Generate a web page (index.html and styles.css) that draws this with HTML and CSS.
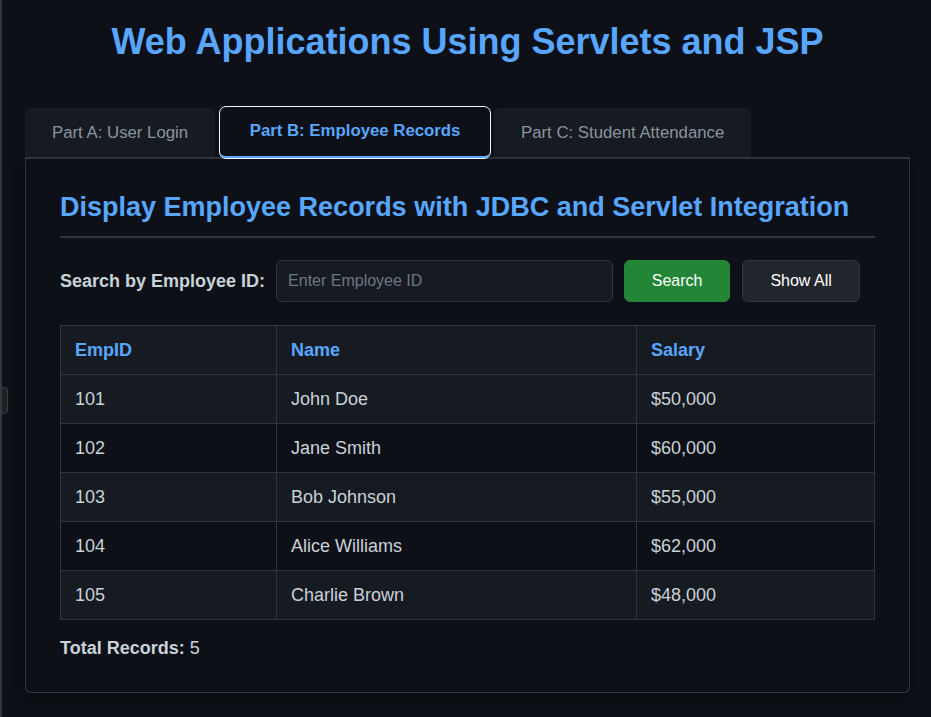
FILE: index.html
```html
<!DOCTYPE html>
<html lang="en">
<head>
<meta charset="utf-8">
<title>Web Applications Using Servlets and JSP</title>
<link rel="stylesheet" href="styles.css">
</head>
<body>
<div class="handle"></div>
<div class="container">
  <h1 class="title">Web Applications Using Servlets and JSP</h1>
  <div class="tabs">
    <button class="tab">Part A: User Login</button>
    <button class="tab active">Part B: Employee Records</button>
    <button class="tab">Part C: Student Attendance</button>
  </div>
  <div class="panel">
    <h2 class="panel-title">Display Employee Records with JDBC and Servlet Integration</h2>
    <div class="search-row">
      <label class="search-label" for="empid">Search by Employee ID:</label>
      <input class="search-input" id="empid" type="text" placeholder="Enter Employee ID">
      <button class="btn btn-green">Search</button>
      <button class="btn btn-dark">Show All</button>
    </div>
    <table class="records">
      <thead>
        <tr><th class="c-id">EmpID</th><th class="c-name">Name</th><th class="c-sal">Salary</th></tr>
      </thead>
      <tbody>
        <tr><td>101</td><td>John Doe</td><td>$50,000</td></tr>
        <tr><td>102</td><td>Jane Smith</td><td>$60,000</td></tr>
        <tr><td>103</td><td>Bob Johnson</td><td>$55,000</td></tr>
        <tr><td>104</td><td>Alice Williams</td><td>$62,000</td></tr>
        <tr><td>105</td><td>Charlie Brown</td><td>$48,000</td></tr>
      </tbody>
    </table>
    <p class="total"><strong>Total Records:</strong> 5</p>
  </div>
</div>
</body>
</html>
```

FILE: styles.css
```css
html, body {
  margin: 0;
  padding: 0;
}
body {
  background: #0d1117;
  color: #c9d1d9;
  font-family: "Liberation Sans", Arial, sans-serif;
  border-left: 2px solid #34373c;
  min-height: 717px;
  box-sizing: border-box;
  position: relative;
}
.handle {
  position: absolute;
  left: -2px;
  top: 387px;
  width: 6px;
  height: 25px;
  background: #1e2024;
  border: 1px solid #3a3d42;
  border-radius: 0 4px 4px 0;
}
.container {
  width: 885px;
  margin: 0 0 0 23px;
}
.title {
  margin: 0;
  padding: 22px 0 0;
  height: 106px;
  box-sizing: border-box;
  text-align: center;
  color: #58a6ff;
  font-size: 36px;
  line-height: 40px;
  font-weight: bold;
}
.tabs {
  display: flex;
  gap: 4px;
  border-bottom: 2px solid #30363d;
  align-items: flex-end;
}
.tab {
  font-family: "Liberation Sans", Arial, sans-serif;
  font-size: 16.8px;
  color: #8b949e;
  background: #161b22;
  border: none;
  border-radius: 6px 6px 0 0;
  padding: 0 27px;
  height: 49px;
  cursor: pointer;
  white-space: nowrap;
}
.tab.active {
  background: #0d1117;
  color: #58a6ff;
  font-weight: bold;
  height: 51px;
  margin-left: 1px;
  padding: 0 29.5px 2px;
  border-bottom: 2px solid #58a6ff;
  border-radius: 6px;
  outline: 1.5px solid #f0f6fc;
  outline-offset: 0;
  position: relative;
  top: 1px;
}
.panel {
  border: 1px solid #30363d;
  border-top: none;
  border-radius: 0 0 6px 6px;
  padding: 28px 34px 34px;
  box-shadow: 0 4px 12px rgba(0, 0, 0, 0.35);
}
.panel-title {
  margin: 0;
  color: #58a6ff;
  font-size: 27px;
  line-height: 40px;
  font-weight: bold;
  padding-bottom: 9px;
  border-bottom: 2px solid #30363d;
}
.search-row {
  display: flex;
  align-items: center;
  gap: 11px;
  margin-top: 22px;
}
.search-label {
  font-weight: bold;
  font-size: 18px;
  color: #c9d1d9;
  white-space: nowrap;
}
.search-input {
  width: 337px;
  height: 42px;
  box-sizing: border-box;
  background: #161b22;
  border: 1px solid #30363d;
  border-radius: 6px;
  padding: 0 11px;
  color: #c9d1d9;
  font-family: "Liberation Sans", Arial, sans-serif;
  font-size: 16px;
}
.search-input::placeholder {
  color: #6e7681;
}
.btn {
  height: 42px;
  box-sizing: border-box;
  border-radius: 6px;
  font-family: "Liberation Sans", Arial, sans-serif;
  font-size: 16px;
  color: #ffffff;
  padding: 0;
  cursor: pointer;
  white-space: nowrap;
  text-align: center;
}
.btn-green {
  background: #238636;
  border: 1px solid #238636;
  width: 106px;
}
.btn-dark {
  background: #21262d;
  border: 1px solid #30363d;
  width: 118px;
  margin-left: 1px;
}
.records {
  margin-top: 23px;
  width: 100%;
  border-collapse: collapse;
  font-size: 18px;
}
.records th,
.records td {
  border: 1px solid #30363d;
  height: 49px;
  padding: 0 14px;
  text-align: left;
  box-sizing: border-box;
}
.records th {
  background: #161b22;
  color: #58a6ff;
  font-weight: bold;
}
.records tbody tr {
  background: #161b22;
}
.records tbody tr:nth-child(even) {
  background: #0d1117;
}
.c-id { width: 216px; }
.c-name { width: 360px; }
.total {
  margin: 18px 0 0;
  font-size: 18px;
  line-height: 20px;
}
.total strong {
  color: #c9d1d9;
}
```
